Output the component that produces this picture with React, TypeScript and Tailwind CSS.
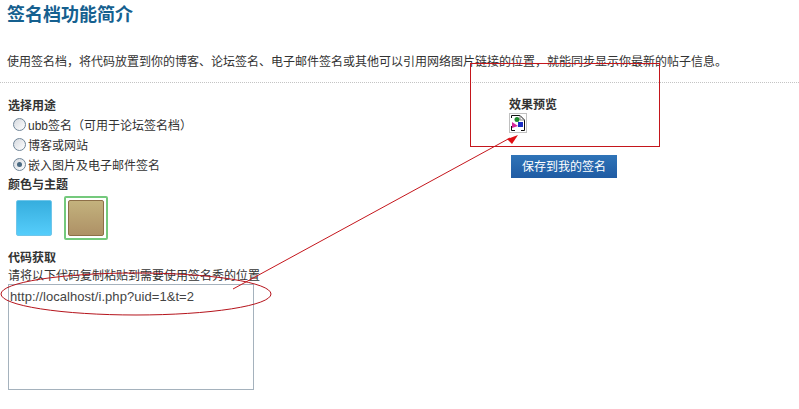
const FONT = 'font-["Liberation_Sans","Noto_Sans_CJK_SC",sans-serif]'

const PURPOSES = [
  { label: 'ubb签名（可用于论坛签名档）', checked: false },
  { label: '博客或网站', checked: false },
  { label: '嵌入图片及电子邮件签名', checked: true },
]

function Radio({ checked }: { checked: boolean }) {
  return (
    <span className="flex h-[13px] w-[13px] shrink-0 items-center justify-center rounded-full border border-[#6f8598] bg-gradient-to-br from-[#d5d9df] to-white">
      {checked ? <span className="h-[5px] w-[5px] rounded-full bg-[#4a6a82]" /> : null}
    </span>
  )
}

function BrokenImage() {
  return (
    <span className="flex h-[20px] w-[18px] items-center justify-center border border-[#c0c0c0] bg-white">
      <svg width="16" height="18" viewBox="0 0 16 18" fill="none">
        <path d="M1.5 4V1.5H10L14.5 6V16.5H11M5 16.5H1.5V12" stroke="#111" strokeWidth="1" />
        <path d="M10 1.5V6H14.5" stroke="#888" strokeWidth="1" />
        <circle cx="7" cy="5.5" r="2.5" fill="#1f8a2e" />
        <path d="M2 8L8 12L2 14Z" fill="#d6289a" />
        <rect x="8" y="8" width="5" height="5" fill="#1c2fc4" />
      </svg>
    </span>
  )
}

function Annotations() {
  return (
    <svg className="pointer-events-none absolute left-0 top-0" width="799" height="409" fill="none">
      <rect x="470.5" y="63.5" width="189" height="83" stroke="#c4161c" strokeWidth="1" />
      <ellipse cx="136" cy="294" rx="135" ry="21" stroke="#b5141c" strokeWidth="1" />
      <path d="M233 289L510 138" stroke="#c4161c" strokeWidth="1" />
      <path d="M518 135L507 139L512 144Z" fill="#e00f14" />
    </svg>
  )
}

export default function App() {
  return (
    <div className={`relative h-[409px] w-[799px] overflow-hidden bg-white text-[12px] text-[#333] ${FONT}`}>
      <h1 className="pl-[7px] pt-[3px] text-[18px] font-bold leading-[24px] text-[#15608f]">签名档功能简介</h1>

      <p className="mt-[26px] pl-[7px] leading-[18px]">
        使用签名档，将代码放置到你的博客、论坛签名、电子邮件签名或其他可以引用网络图片链接的位置，就能同步显示你最新的帖子信息。
      </p>

      <div className="mt-[11px] border-b border-dotted border-[#c4c4c4]" />

      <div className="mt-[15px] flex">
        <div className="w-[501px] pl-[8px]">
          <h2 className="font-bold leading-[16px]">选择用途</h2>
          <div>
            {PURPOSES.map((item) => (
              <label key={item.label} className="flex h-[20px] items-center gap-[2px] pl-[5px]">
                <Radio checked={item.checked} />
                <span className="pt-[3px]">{item.label}</span>
              </label>
            ))}
          </div>

          <h2 className="mt-[3px] font-bold leading-[16px]">颜色与主题</h2>
          <div className="mt-[3px] flex items-center gap-[12px] pl-[8px]">
            <span className="h-[36px] w-[36px] rounded-[2px] border border-[#6fc6ea] bg-gradient-to-b from-[#36aede] to-[#55cdfb]" />
            <span className="flex h-[44px] w-[44px] items-center justify-center rounded-[2px] border-2 border-[#74c97c]">
              <span className="h-[36px] w-[36px] rounded-[2px] border border-[#8d6f48] bg-gradient-to-b from-[#c3b27d] to-[#ae9166]" />
            </span>
          </div>

          <h2 className="mt-[10px] font-bold leading-[16px]">代码获取</h2>
          <p className="mt-[2px] leading-[16px]">请将以下代码复制粘贴到需要使用签名秀的位置</p>
          <textarea
            readOnly
            defaultValue="http://localhost/i.php?uid=1&t=2"
            className="block h-[106px] w-[246px] resize-none border border-[#a5b2bd] px-[1px] py-[4px] text-[13px] leading-[16px] tracking-[0.06px] text-[#444] outline-none"
          />
        </div>

        <div className="pl-[8px]">
          <h2 className="font-bold leading-[15px]">效果预览</h2>
          <BrokenImage />
          <button
            type="button"
            className="ml-[2px] mt-[22px] block h-[23px] w-[106px] bg-gradient-to-b from-[#2f74b8] to-[#1f5ba3] pt-[1px] text-[12px] text-white"
          >
            保存到我的签名
          </button>
        </div>
      </div>

      <Annotations />
    </div>
  )
}
